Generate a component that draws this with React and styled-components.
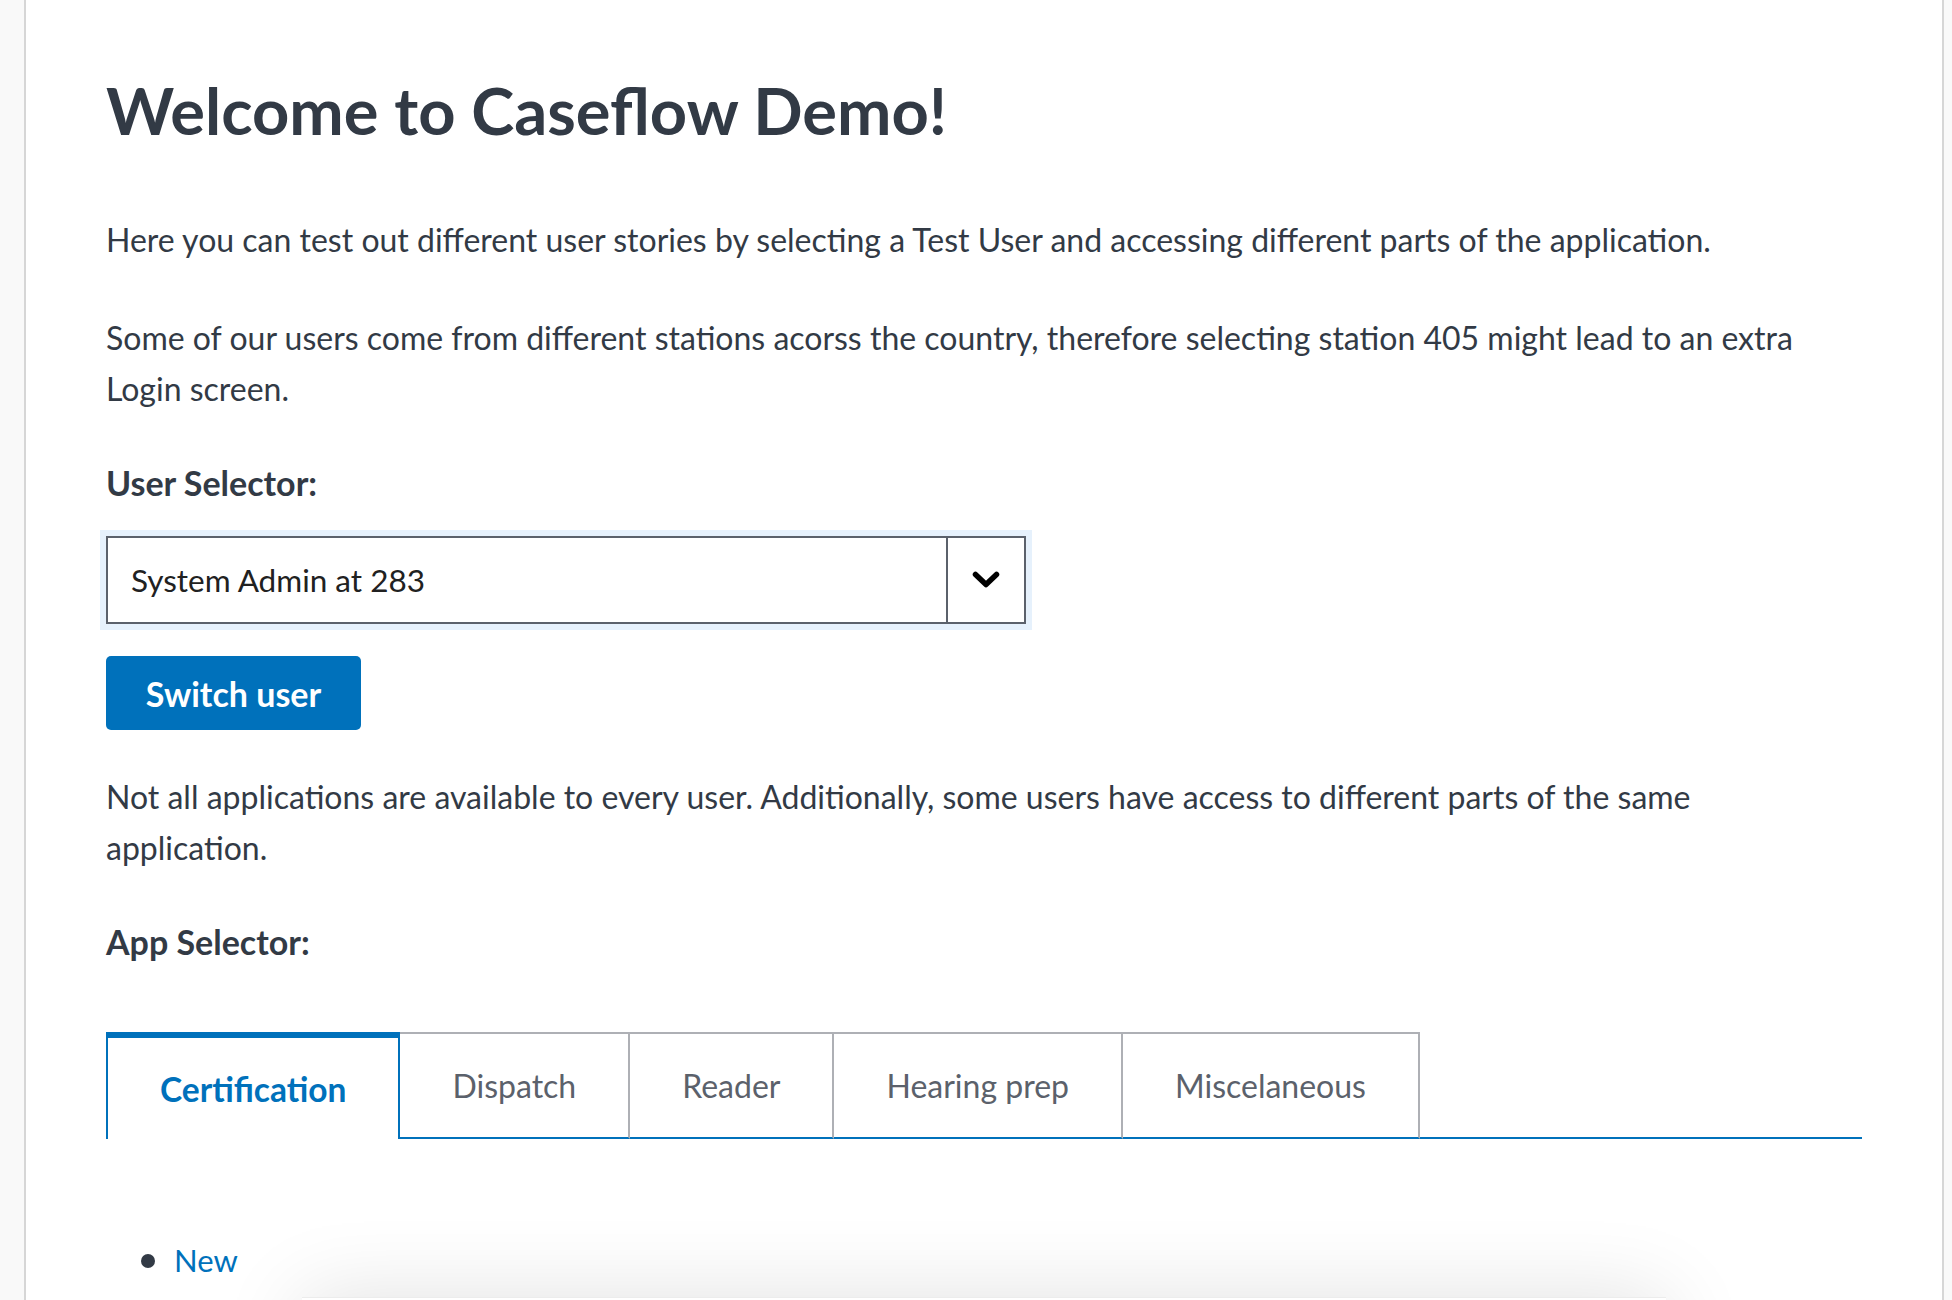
import styled, { createGlobalStyle } from 'styled-components';

const GlobalStyle = createGlobalStyle`
    html, body {
        margin: 0;
        padding: 0;
        background: #f9f9f9;
    }
    body {
        font-family: Lato, "Noto Sans", sans-serif;
        color: #323a45;
        overflow: hidden;
    }
`;

const tabs = ['Certification', 'Dispatch', 'Reader', 'Hearing prep', 'Miscelaneous'];

const App = () => (
    <>
        <GlobalStyle />
        <Page>
            <Content>
                <Title>Welcome to Caseflow Demo!</Title>
                <Paragraph $top={62}>
                    Here you can test out different user stories by selecting a Test User and accessing different parts of the application.
                </Paragraph>
                <Paragraph $top={47}>
                    Some of our users come from different stations acorss the country, therefore selecting station 405 might lead to an extra Login screen.
                </Paragraph>
                <Label $top={43}>User Selector:</Label>
                <Select>
                    <SelectValue>System Admin at 283</SelectValue>
                    <SelectArrow>
                        <svg width="28" height="18" viewBox="0 0 28 18" fill="none">
                            <path d="M3.5 3.5 L14 13.5 L24.5 3.5" stroke="#000" strokeWidth="5.5" strokeLinecap="round" strokeLinejoin="round" />
                        </svg>
                    </SelectArrow>
                </Select>
                <Button>Switch user</Button>
                <Paragraph $top={41}>
                    Not all applications are available to every user. Additionally, some users have access to different parts of the same application.
                </Paragraph>
                <Label $top={43}>App Selector:</Label>
                <TabList>
                    {tabs.map((tab, i) => (
                        <Tab key={tab} $active={i === 0}>
                            {tab}
                        </Tab>
                    ))}
                    <TabFiller />
                </TabList>
                <LinkList>
                    <LinkItem>
                        <Dot />
                        <Link>New</Link>
                    </LinkItem>
                </LinkList>
                <Card />
            </Content>
        </Page>
    </>
);

export default App;

const Page = styled.div`
    margin: 0 8px 0 24px;
    min-height: 1300px;
    background: #ffffff;
    border-left: 2px solid #d6d6d6;
    border-right: 2px solid #d6d6d6;
`;

const Content = styled.div`
    padding: 1px 80px 0;
    display: flex;
    flex-direction: column;
    align-items: flex-start;
`;

const Title = styled.h1`
    margin: 67px 0 0;
    font-size: 65px;
    line-height: 84px;
    font-weight: 700;
    color: #323a45;
`;

const Paragraph = styled.p`
    margin: ${({ $top }) => $top}px 0 0;
    max-width: 1720px;
    font-size: 32px;
    line-height: 51px;
    color: #323a45;
`;

const Label = styled.div`
    margin-top: ${({ $top }) => $top}px;
    font-size: 34px;
    line-height: 51px;
    font-weight: 700;
    color: #323a45;
`;

const Select = styled.div`
    margin-top: 28px;
    width: 920px;
    height: 88px;
    box-sizing: border-box;
    display: flex;
    border: 2px solid #5b616b;
    outline: 6px solid #e6f1fc;
    background: #ffffff;
`;

const SelectValue = styled.div`
    flex: 1;
    display: flex;
    align-items: center;
    padding-left: 23px;
    font-size: 31.5px;
    color: #212121;
`;

const SelectArrow = styled.div`
    width: 76px;
    border-left: 2px solid #5b616b;
    display: flex;
    align-items: center;
    justify-content: center;
`;

const Button = styled.button`
    margin-top: 32px;
    width: 255px;
    height: 74px;
    border: none;
    border-radius: 5px;
    background: #0071bb;
    color: #ffffff;
    font-family: Lato, "Noto Sans", sans-serif;
    font-size: 34px;
    font-weight: 700;
    padding: 0;
`;

const TabList = styled.div`
    margin-top: 65px;
    display: flex;
    align-self: stretch;
    height: 107px;
`;

const Tab = styled.div`
    box-sizing: border-box;
    display: flex;
    align-items: center;
    justify-content: center;
    padding: 0 52px;
    font-size: ${({ $active }) => ($active ? '33.5px' : '32px')};
    color: ${({ $active }) => ($active ? '#0071bb' : '#5b616b')};
    font-weight: ${({ $active }) => ($active ? 700 : 400)};
    border-top: ${({ $active }) => ($active ? '6px solid #0071bb' : '2px solid #aeb0b5')};
    border-left: ${({ $active }) => ($active ? '2px solid #0071bb' : 'none')};
    border-right: 2px solid ${({ $active }) => ($active ? '#0071bb' : '#aeb0b5')};
    border-bottom: ${({ $active }) => ($active ? 'none' : '2px solid #0071bb')};
    background: #ffffff;
`;

const TabFiller = styled.div`
    flex: 1;
    border-bottom: 2px solid #0071bb;
`;

const LinkList = styled.ul`
    margin: 96px 0 0;
    padding: 0 0 0 35px;
    list-style: none;
`;

const LinkItem = styled.li`
    display: flex;
    align-items: center;
    gap: 19px;
    font-size: 31px;
    line-height: 51px;
`;

const Dot = styled.span`
    width: 14px;
    height: 14px;
    border-radius: 50%;
    background: #323a45;
`;

const Link = styled.a`
    color: #0071bb;
    text-decoration: none;
`;

const Card = styled.div`
    margin-top: 11px;
    align-self: center;
    width: 1364px;
    height: 300px;
    background: #ffffff;
    border-top: 1px solid #ececec;
    box-shadow: 0 0 80px rgba(0, 0, 0, 0.12);
`;
